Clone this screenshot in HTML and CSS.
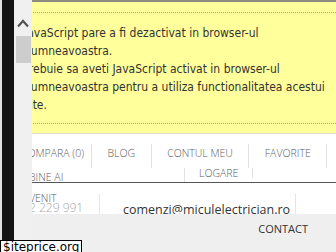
FILE: index.html
```html
<!DOCTYPE html>
<html lang="ro">
<head>
  <meta charset="UTF-8">
  <meta name="viewport" content="width=device-width, initial-scale=1.0">
  <title>Micul Electrician</title>
  <link rel="stylesheet" href="styles.css">
</head>
<body>

  <div class="screen">
    <div class="gutter">
      <div class="edge"></div>
      <div class="blackbar"></div>
      <div class="scrollbar">
        <svg class="arrow" width="12" height="10" viewBox="0 0 12 10">
          <path d="M1 8.5 L6 3 L11 8.5" fill="none" stroke="#555" stroke-width="2.2"/>
        </svg>
        <div class="thumb"></div>
      </div>
    </div>

    <div class="page">
      <!-- Mesaj pentru JavaScript dezactivat -->
      <div class="notice">
        <div class="notice-box">
          <p>JavaScript pare a fi dezactivat in browser-ul dumneavoastra.</p>
          <p>Trebuie sa aveti JavaScript activat in browser-ul dumneavoastra pentru a utiliza functionalitatea acestui site.</p>
        </div>
      </div>

      <div class="header">
        <div class="nav">
          <ul class="nav-main">
            <li>COMPARA (0)</li>
            <li>BLOG</li>
            <li>CONTUL MEU</li>
            <li>FAVORITE</li>
          </ul>
          <ul class="nav-user">
            <li class="welcome">BINE AI</li>
            <li>LOGARE</li>
          </ul>
        </div>

        <div class="info">
          <div class="hello">
            <div class="hello-title">VENIT</div>
            <div class="phone">2 229 991</div>
          </div>
          <div class="email">comenzi@miculelectrician.ro</div>
        </div>
      </div>

      <div class="footer">CONTACT</div>
    </div>
  </div>

  <div class="watermark">$iteprice.org</div>

</body>
</html>
```

FILE: styles.css
```css
body {
  margin: 0;
  font-family: "Open Sans", Arial, sans-serif;
  background-color: #efefef;
}
.screen {
  display: flex;
  height: 252px;
  overflow: hidden;
}
.gutter {
  display: flex;
  flex: none;
}
.edge {
  width: 2px;
  background-color: #e2e2e2;
}
.blackbar {
  width: 12px;
  height: 240px;
  background-color: #141414;
}
.scrollbar {
  width: 18px;
  padding-top: 18px;
  display: flex;
  flex-direction: column;
  align-items: center;
  background-color: #f0f0f0;
}
.arrow {
  display: block;
}
.thumb {
  width: 15px;
  height: 27px;
  margin-top: 8px;
  margin-left: 1px;
  background-color: #cdcdcd;
}
.page {
  flex: 1;
  min-width: 0;
  overflow: hidden;
  border-top: 2px solid #8b8b80;
}

/* noscript box */
.notice {
  padding: 10px 0 9px;
  background-color: #ffff9c;
  border-bottom: 1px solid #dcdcc8;
  font-family: "DejaVu Sans Condensed", "DejaVu Sans", sans-serif;
  font-stretch: condensed;
  font-size: 12px;
  line-height: 18px;
  color: #333;
}
.notice-box {
  margin-left: -8px;
  padding: 11px 0 9px;
  border-top: 1px dotted #a9a957;
  border-bottom: 1px dotted #a9a957;
}
.notice p {
  margin: 0;
}

/* header */
.header {
  height: 80px;
  overflow: hidden;
  background-color: #fff;
}
.nav {
  margin-left: -11px;
  padding-top: 10px;
  border-bottom: 1px solid #555;
}
.nav ul {
  display: flex;
  align-items: flex-start;
  margin: 0;
  padding: 0;
  list-style: none;
}
.nav li {
  padding: 0 15.5px;
  border-right: 1px solid #e2e2e2;
  font-size: 10.5px;
  font-weight: 300;
  color: #5a5a5a;
  text-align: center;
  white-space: nowrap;
}
.nav-main li {
  line-height: 18px;
  padding-bottom: 6px;
}
.nav-main li:first-child {
  padding-left: 0;
  padding-right: 7px;
}
.nav-user li {
  line-height: 10px;
  margin-bottom: 4px;
  padding: 0 14px;
}
.nav-user .welcome {
  box-sizing: border-box;
  width: 164px;
  margin-bottom: 0;
  padding: 4px 0 0 8px;
  text-align: left;
}
.info {
  display: flex;
  margin-top: 11px;
  margin-left: -3px;
}
.hello {
  box-sizing: border-box;
  width: 71px;
  border-right: 1px solid #e5e5e5;
}
.hello-title {
  font-size: 10.5px;
  font-weight: 300;
  line-height: 8px;
  color: #555;
}
.phone {
  font-size: 12px;
  font-weight: 300;
  line-height: 12px;
  color: #a5a5a5;
}
.email {
  box-sizing: border-box;
  width: 196px;
  padding: 8px 0 0 23px;
  border-right: 1px solid #e5e5e5;
  font-size: 12.5px;
  line-height: 16px;
  color: #333;
}

/* footer */
.footer {
  padding: 7px 28px 0 0;
  text-align: right;
  font-size: 11px;
  line-height: 16px;
  color: #333;
}

.watermark {
  position: absolute;
  left: 0;
  top: 240px;
  padding: 0 2px;
  background-color: #fff;
  border: 1px solid #000;
  font-family: "DejaVu Sans", sans-serif;
  font-size: 12px;
  line-height: 13px;
  color: #000;
}
```
